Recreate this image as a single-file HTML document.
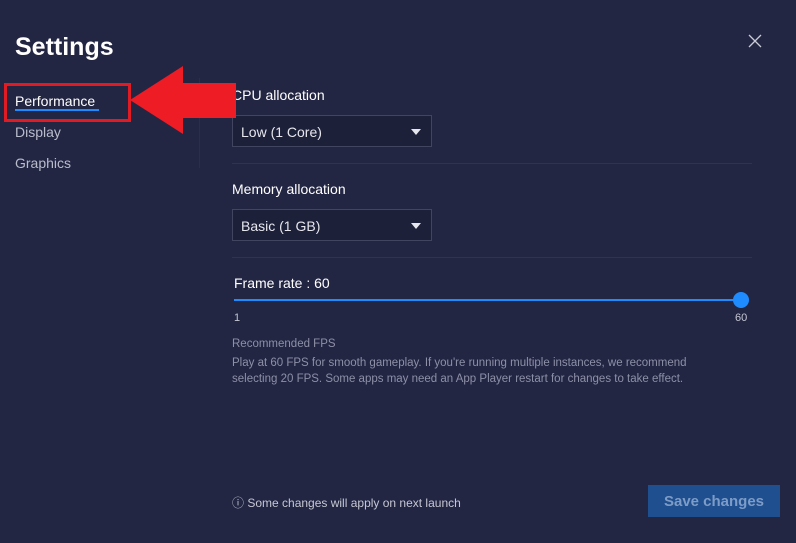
<!DOCTYPE html>
<html><head><style>
body{margin:0;width:796px;height:543px;background:#232643;font-family:"Liberation Sans",sans-serif;position:relative;overflow:hidden;color:#fff}
.a{position:absolute}
.dd{position:absolute;left:232px;width:198px;height:30px;background:#1d2039;border:1px solid #41455f;font-size:14px;color:#e6e7ee;line-height:32px;text-indent:8px}
.dd:after{content:"";position:absolute;right:10px;top:13px;border-left:5px solid transparent;border-right:5px solid transparent;border-top:6px solid #e6e7ee}
.hr{position:absolute;left:232px;width:520px;height:1px;background:#2f3350}
</style></head><body>
<div class="a" style="left:15px;top:33px;font-size:25px;font-weight:bold">Settings</div>
<svg class="a" style="left:748px;top:34px" width="14" height="14"><path d="M1 1L13 13M13 1L1 13" stroke="#c9cbd6" stroke-width="1.3"/></svg>
<div class="a" style="left:199px;top:78px;width:1px;height:90px;background:#2a2e4b"></div>
<div class="a" style="left:15px;top:93px;font-size:14px;color:#fff">Performance</div>
<div class="a" style="left:15px;top:109px;width:84px;height:2px;background:#1e8cff"></div>
<div class="a" style="left:15px;top:124px;font-size:14px;color:#b9bccb">Display</div>
<div class="a" style="left:15px;top:155px;font-size:14px;color:#b9bccb">Graphics</div>
<div class="a" style="left:232px;top:87px;font-size:14px;color:#fff">CPU allocation</div>
<div class="dd" style="top:115px">Low (1 Core)</div>
<div class="hr" style="top:163px"></div>
<div class="a" style="left:232px;top:181px;font-size:14px">Memory allocation</div>
<div class="dd" style="top:209px">Basic (1 GB)</div>
<div class="hr" style="top:257px"></div>
<div class="a" style="left:234px;top:275px;font-size:14px">Frame rate : 60</div>
<div class="a" style="left:234px;top:299px;width:506px;height:2px;background:#1e8cff"></div>
<div class="a" style="left:733px;top:292px;width:16px;height:16px;border-radius:50%;background:#1e8cff"></div>
<div class="a" style="left:234px;top:312px;font-size:11px;color:#c5c7d3">1</div>
<div class="a" style="left:735px;top:312px;font-size:11px;color:#c5c7d3">60</div>
<div class="a" style="left:232px;top:338px;font-size:11.5px;color:#8d90a6">Recommended FPS</div>
<div class="a" style="left:232px;top:355px;font-size:11.5px;color:#8d90a6;line-height:16px;width:492px">Play at 60 FPS for smooth gameplay. If you're running multiple instances, we recommend selecting 20 FPS. Some apps may need an App Player restart for changes to take effect.</div>
<div class="a" style="left:232px;top:494px;font-size:12px;color:#c5c7d3">ⓘ Some changes will apply on next launch</div>
<div class="a" style="left:648px;top:485px;width:132px;height:32px;background:#1f4f8f;color:#7d9cc7;font-size:15px;font-weight:bold;text-align:center;line-height:33px">Save changes</div>
<div class="a" style="left:4px;top:83px;width:121px;height:33px;border:3px solid #e01b24"></div>
<svg class="a" style="left:0;top:0" width="250" height="150"><path d="M130 100L183 66V83H236V118H183V134Z" fill="#ee1c25"/></svg>
</body></html>
